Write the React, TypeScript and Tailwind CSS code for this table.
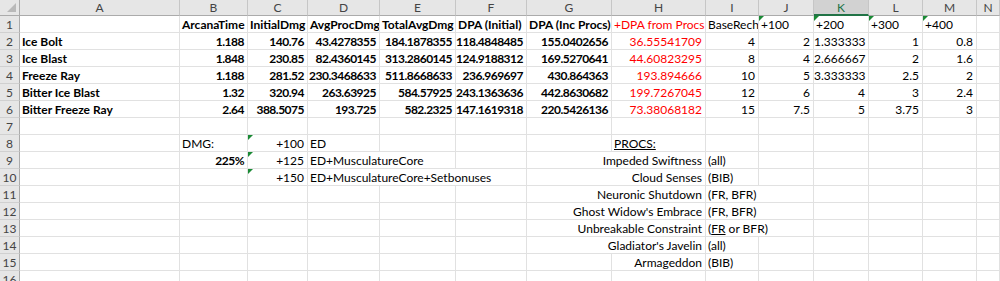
import type { ReactNode } from 'react';

type Cell = {
  t?: ReactNode;
  span?: number;
  r?: boolean;
  b?: boolean;
  red?: boolean;
  tri?: boolean;
  u?: boolean;
};

const COLS = ['A', 'B', 'C', 'D', 'E', 'F', 'G', 'H', 'I', 'J', 'K', 'L', 'M', 'N'];

const empty = (n: number): Cell[] => Array.from({ length: n }, () => ({}));

const dataRow = (name: string, bold: string[], red: string, rest: string[]): Cell[] => [
  { t: name, b: true },
  ...bold.map(t => ({ t, b: true, r: true })),
  { t: red, r: true, red: true },
  ...rest.map(t => ({ t, r: true })),
  {}
];

const ROWS: Cell[][] = [
  [
    {},
    { t: 'ArcanaTime', b: true },
    { t: 'InitialDmg', b: true },
    { t: 'AvgProcDmg', b: true },
    { t: 'TotalAvgDmg', b: true },
    { t: 'DPA (Initial)', b: true },
    { t: 'DPA (Inc Procs)', b: true },
    { t: '+DPA from Procs', red: true },
    { t: 'BaseRech' },
    { t: '+100', tri: true },
    { t: '+200', tri: true },
    { t: '+300', tri: true },
    { t: '+400', tri: true },
    {}
  ],
  dataRow('Ice Bolt', ['1.188', '140.76', '43.4278355', '184.1878355', '118.4848485', '155.0402656'], '36.55541709', ['4', '2', '1.333333', '1', '0.8']),
  dataRow('Ice Blast', ['1.848', '230.85', '82.4360145', '313.2860145', '124.9188312', '169.5270641'], '44.60823295', ['8', '4', '2.666667', '2', '1.6']),
  dataRow('Freeze Ray', ['1.188', '281.52', '230.3468633', '511.8668633', '236.969697', '430.864363'], '193.894666', ['10', '5', '3.333333', '2.5', '2']),
  dataRow('Bitter Ice Blast', ['1.32', '320.94', '263.63925', '584.57925', '243.1363636', '442.8630682'], '199.7267045', ['12', '6', '4', '3', '2.4']),
  dataRow('Bitter Freeze Ray', ['2.64', '388.5075', '193.725', '582.2325', '147.1619318', '220.5426136'], '73.38068182', ['15', '7.5', '5', '3.75', '3']),
  empty(14),
  [{}, { t: 'DMG:' }, { t: '+100', r: true, tri: true }, { t: 'ED' }, {}, {}, {}, { t: 'PROCS:', u: true }, ...empty(6)],
  [
    {},
    { t: '225%', b: true, r: true },
    { t: '+125', r: true, tri: true },
    { t: 'ED+MusculatureCore', span: 2 },
    {},
    { t: 'Impeded Swiftness', span: 2, r: true },
    { t: '(all)' },
    ...empty(5)
  ],
  [
    {},
    {},
    { t: '+150', r: true, tri: true },
    { t: 'ED+MusculatureCore+Setbonuses', span: 3 },
    { t: 'Cloud Senses', span: 2, r: true },
    { t: '(BIB)' },
    ...empty(5)
  ],
  [...empty(6), { t: 'Neuronic Shutdown', span: 2, r: true }, { t: '(FR, BFR)', span: 2 }, ...empty(4)],
  [...empty(6), { t: "Ghost Widow's Embrace", span: 2, r: true }, { t: '(FR, BFR)', span: 2 }, ...empty(4)],
  [
    ...empty(6),
    { t: 'Unbreakable Constraint', span: 2, r: true },
    { t: <>(<span className="underline">FR</span> or BFR)</>, span: 2 },
    ...empty(4)
  ],
  [...empty(6), { t: "Gladiator's Javelin", span: 2, r: true }, { t: '(all)' }, ...empty(5)],
  [...empty(7), { t: 'Armageddon', r: true }, { t: '(BIB)' }, ...empty(5)],
  empty(14)
];

const spanClass: Record<number, string> = { 1: '', 2: 'col-span-2', 3: 'col-span-3' };

const GridCell = ({ cell }: { cell: Cell }) => (
  <div
    className={[
      'relative border-r border-b border-[#e1e1e1] bg-white whitespace-nowrap overflow-hidden leading-[16px] pt-px',
      spanClass[cell.span ?? 1],
      cell.r ? 'text-right pr-[3px]' : 'text-left pl-[2px]',
      cell.b ? 'font-bold' : '',
      cell.b && cell.r ? 'tracking-[-0.5px]' : '',
      cell.red ? 'text-[#ff0000]' : 'text-black',
      cell.u ? 'underline' : ''
    ].join(' ')}
  >
    {cell.tri && (
      <span className="absolute left-0 top-0 w-0 h-0 border-t-[5px] border-r-[5px] border-t-[#1a8a35] border-r-transparent" />
    )}
    {cell.t}
  </div>
);

const App = () => {
  return (
    <div className="w-[1000px] h-[281px] overflow-hidden bg-white font-['Lato',sans-serif] text-[12px]">
      <div className="grid grid-cols-[20px_160px_68px_60px_72px_76px_71px_85px_94px_53px_55px_55px_54px_54px_1fr] grid-rows-[16px] auto-rows-[17px]">
        {/* Corner */}
        <div className="relative bg-[#e6e6e6] border-r border-b border-[#ababab]">
          <span className="absolute right-[3px] bottom-[3px] w-0 h-0 border-b-[9px] border-l-[9px] border-b-[#b9b9b9] border-l-transparent" />
        </div>
        {/* Column headers */}
        {COLS.map(c =>
          c === 'K' ? (
            <div
              key={c}
              className="bg-[#d2d2d2] border-r border-[#c6c6c6] border-b-2 border-b-[#217346] text-[#217346] text-center leading-[15px]"
            >
              {c}
            </div>
          ) : (
            <div
              key={c}
              className="bg-[#e6e6e6] border-r border-[#c6c6c6] border-b border-b-[#ababab] text-[#444] text-center leading-[15px]"
            >
              {c}
            </div>
          )
        )}
        {ROWS.map((row, i) => (
          <>
            <div
              key={`h${i}`}
              className="bg-[#e6e6e6] border-r border-r-[#ababab] border-b border-b-[#d0d0d0] text-[#444] text-center leading-[16px] pt-px"
            >
              {i + 1}
            </div>
            {row.map((cell, j) => (
              <GridCell key={`${i}-${j}`} cell={cell} />
            ))}
          </>
        ))}
      </div>
    </div>
  );
};

export default App;
